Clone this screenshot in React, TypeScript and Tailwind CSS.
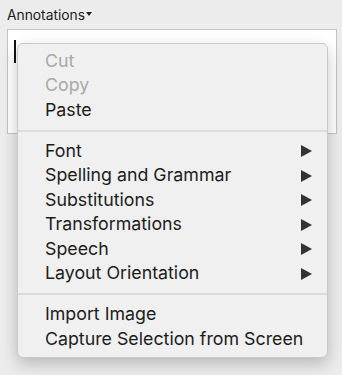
import React from "react";

const Arrow = () => (
  <svg width="11" height="12" viewBox="0 0 11 12" className="shrink-0">
    <polygon points="0,0 11,6 0,12" fill="#333333" />
  </svg>
);

type Item = { label: string; disabled?: boolean; sub?: boolean };

const groups: Item[][] = [
  [
    { label: "Cut", disabled: true },
    { label: "Copy", disabled: true },
    { label: "Paste" },
  ],
  [
    { label: "Font", sub: true },
    { label: "Spelling and Grammar", sub: true },
    { label: "Substitutions", sub: true },
    { label: "Transformations", sub: true },
    { label: "Speech", sub: true },
    { label: "Layout Orientation", sub: true },
  ],
  [{ label: "Import Image" }, { label: "Capture Selection from Screen" }],
];

export default function App() {
  return (
    <div
      className="relative w-[342px] h-[375px] bg-[#ececec] overflow-hidden"
      style={{ fontFamily: "Inter, 'Liberation Sans', sans-serif" }}
    >
      <div className="flex flex-col px-[7px] pt-[5px] pr-[5px]">
        <div className="flex items-center h-[20px] text-[13.8px] text-[#1a1a1a]">
          <span>Annotations</span>
          <svg width="6" height="4" viewBox="0 0 6 4" className="ml-[1px] mt-[-2px]">
            <polygon points="0,0 6,0 3,4" fill="#222" />
          </svg>
        </div>
        <div className="mt-[4px] h-[105px] border border-[#c3c3c3] bg-white pl-[6px] pt-[10px]">
          <div className="w-[1.5px] h-[23px] bg-[#111]" />
        </div>
      </div>

      <div className="absolute left-[17px] top-[43px] w-[311px] rounded-[6px] border border-[#c9c9c9] bg-[#f0f0f0] shadow-[0_6px_16px_rgba(0,0,0,0.22)] pt-[5px] pb-[5px]">
        {groups.map((g, gi) => (
          <div key={gi}>
            {gi > 0 && (
              <div className="h-[16.5px] flex items-center">
                <div className="w-full h-[2px] bg-[#dcdcdc]" />
              </div>
            )}
            {g.map((it) => (
              <div
                key={it.label}
                className={`h-[24.5px] flex items-center pl-[27px] pr-[15px] text-[17.8px] ${
                  it.disabled ? "text-[#a8a8a8]" : "text-[#1c1c1c]"
                }`}
              >
                <span className="flex-1 whitespace-nowrap">{it.label}</span>
                {it.sub && <Arrow />}
              </div>
            ))}
          </div>
        ))}
      </div>
    </div>
  );
}
